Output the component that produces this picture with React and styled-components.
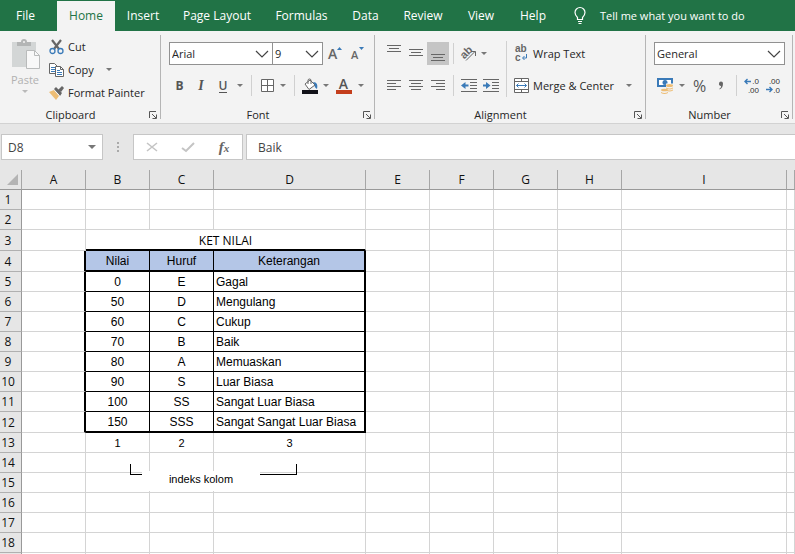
import React from "react";
import styled, { createGlobalStyle } from "styled-components";

const tabs = [
  { name: "File", width: 57 },
  { name: "Home", width: 58, active: true },
  { name: "Insert", width: 56 },
  { name: "Page Layout", width: 92 },
  { name: "Formulas", width: 77 },
  { name: "Data", width: 51 },
  { name: "Review", width: 64 },
  { name: "View", width: 52 },
  { name: "Help", width: 52 },
];

const columns = [
  { name: "A", width: 64 },
  { name: "B", width: 64 },
  { name: "C", width: 64 },
  { name: "D", width: 152 },
  { name: "E", width: 64 },
  { name: "F", width: 64 },
  { name: "G", width: 64 },
  { name: "H", width: 64 },
  { name: "I", width: 165 },
];

const grades = [
  ["0", "E", "Gagal"],
  ["50", "D", "Mengulang"],
  ["60", "C", "Cukup"],
  ["70", "B", "Baik"],
  ["80", "A", "Memuaskan"],
  ["90", "S", "Luar Biasa"],
  ["100", "SS", "Sangat Luar Biasa"],
  ["150", "SSS", "Sangat Sangat Luar Biasa"],
];

const Arrow = ({ color = "#777" }) => (
  <svg width="6" height="3" viewBox="0 0 6 3">
    <path d="M0 0h6L3 3z" fill={color} />
  </svg>
);

const Chevron = () => (
  <svg width="14" height="8" viewBox="0 0 14 8">
    <path d="M1 1l6 6 6-6" fill="none" stroke="#444" strokeWidth="1.2" />
  </svg>
);

const Lines = ({ rows, height = 12, top = 0 }) => (
  <svg width="14" height={height} viewBox={`0 0 14 ${height}`}>
    {rows.map(([x, w], i) => (
      <rect key={i} x={x} y={top + i * 3} width={w} height="1" fill="#666" />
    ))}
  </svg>
);

const Indent = ({ right }) => (
  <svg width="16" height="14" viewBox="0 0 16 14">
    <path
      d="M0 .5h16M9 3.5h7M9 6.5h7M9 9.5h7M0 12.5h16"
      stroke="#666"
      fill="none"
    />
    <path
      d={right ? "M0 5.500h3V3l4.500 3.500L3 10V7.500H0z" : "M7.500 5.500h-3V3L0 6.500 4.500 10V7.500h3z"}
      fill="#3a7ab8"
    />
  </svg>
);

const Launcher = () => (
  <svg width="8" height="8" viewBox="0 0 8 8">
    <path d="M.5 7V.5H7M3 3l4 4M7.500 3.500v4h-4" fill="none" stroke="#555" />
  </svg>
);

const PasteIcon = () => (
  <svg width="29" height="30" viewBox="0 0 29 30">
    <path d="M1 3h24v25H1z" fill="#d3d6d6" />
    <path d="M6 7V3h4a3 3 0 016 0h4v4z" fill="#b3b5b5" />
    <circle cx="13" cy="3" r="1" fill="#f3f3f3" />
    <path d="M15.500 11.500h8l5 5v13h-13z" fill="#f8f8f8" stroke="#b9bbbb" />
    <path d="M23.500 11.500v5h5" fill="none" stroke="#b9bbbb" />
  </svg>
);

const CutIcon = () => (
  <svg width="16" height="16" viewBox="0 0 16 16">
    <path d="M3 1l7 9M12 1L5 10" stroke="#666" strokeWidth="2.200" fill="none" />
    <circle cx="3.500" cy="12" r="2.500" fill="none" stroke="#3a7ab8" strokeWidth="1.300" />
    <circle cx="11.500" cy="12" r="2.500" fill="none" stroke="#3a7ab8" strokeWidth="1.300" />
  </svg>
);

const CopyIcon = () => (
  <svg width="16" height="16" viewBox="0 0 16 16">
    <path d="M.5 1.500h5l3 3v7h-8z" fill="#fff" stroke="#666" />
    <path d="M2 5.500h4M2 7.500h4M2 9.500h4" stroke="#3a7ab8" />
    <path d="M6.500 4.500h5l3 3v7h-8z" fill="#fff" stroke="#666" />
    <path d="M11.500 4.500v3h3" fill="none" stroke="#666" />
    <path d="M8 8.500h3M8 10.500h5M8 12.500h5" stroke="#3a7ab8" />
  </svg>
);

const BrushIcon = () => (
  <svg width="16" height="16" viewBox="0 0 16 16">
    <path d="M0 7l5-2 5 6-3 4z" fill="#edbd75" />
    <path d="M5 4l2-2 6 6-2 3z" fill="#666" />
    <path d="M9 5l4-4 2 2-3 4z" fill="#666" />
    <path d="M5.500 5.500l5 5" stroke="#f3f3f3" />
  </svg>
);

const BordersIcon = () => (
  <svg width="13" height="13" viewBox="0 0 13 13">
    <path d="M.5.5h12v12H.5z" fill="#fff" stroke="#666" />
    <path d="M6.500 1v11M1 6.500h11" stroke="#666" />
  </svg>
);

const FillIcon = () => (
  <svg width="16" height="16" viewBox="0 0 16 16">
    <path d="M3 6l5-4 5 5-6 4.500z" fill="#fff" stroke="#666" />
    <path d="M6 6V2.500a1.500 1.500 0 013 0V6" fill="none" stroke="#666" />
    <path d="M11 4c4 0 5 3 4 7-2-1-3-3-2-4z" fill="#3a7ab8" />
    <rect y="12" width="16" height="4" fill="#111118" />
  </svg>
);

const OrientationIcon = () => (
  <svg width="17" height="16" viewBox="0 0 17 16">
    <text
      x="2"
      y="12"
      transform="rotate(-45 5 10)"
      fontFamily="Liberation Sans, sans-serif"
      fontSize="11"
      fontWeight="700"
      fill="#666"
    >
      ab
    </text>
    <path d="M6 14.500l9-9M11 5.500h4.500V10" fill="none" stroke="#666" />
  </svg>
);

const WrapIcon = () => (
  <svg width="16" height="17" viewBox="0 0 16 17">
    <g fontFamily="Liberation Sans, sans-serif" fontSize="10" fontWeight="700" fill="#666">
      <text x="1" y="7">ab</text>
      <text x="1" y="16">c</text>
    </g>
    <path d="M12.500 9v4H9M10.500 11l-2 2 2 2" fill="none" stroke="#3a7ab8" />
  </svg>
);

const MergeIcon = () => (
  <svg width="16" height="15" viewBox="0 0 16 15">
    <path d="M.5.5h14v14H.5z" fill="#fff" stroke="#666" />
    <path d="M1 3.500h13M1 11.500h13M7.500 1v2.500M7.500 11.500V14" stroke="#666" />
    <path d="M2.500 7.500h10M4.500 5.500l-2 2 2 2M10.500 5.500l2 2-2 2" fill="none" stroke="#3a7ab8" />
  </svg>
);

const MoneyIcon = () => (
  <svg width="16" height="16" viewBox="0 0 16 16">
    <path d="M0 0h16v9H0z" fill="#3a7ab8" />
    <path d="M2 2h12v5H2z" fill="#fff" />
    <circle cx="8" cy="4.500" r="2.500" fill="#3a7ab8" />
    <path d="M9 5.500h7v8h-4v2.500H4v-5h5z" fill="#f3f3f3" />
    <g fill="#edbd75">
      <ellipse cx="12.500" cy="7.500" rx="3.500" ry="1.500" />
      <path d="M9 9.500q3.500 2 7 0v1q-3.500 2-7 0zM9 11.500q3.500 2 7 0v1q-3.500 2-7 0z" />
      <ellipse cx="7.500" cy="12" rx="3.500" ry="1.300" />
      <path d="M4 14q3.500 2 7 0v1q-3.500 2-7 0z" />
    </g>
  </svg>
);

const DecimalIcon = ({ less }) => (
  <svg width="16" height="15" viewBox="0 0 16 15">
    <g fontFamily="Liberation Sans, sans-serif" fontSize="8" fill="#333" textAnchor="end">
      <text x="15" y="6">{less ? ".00" : ".0"}</text>
      <text x="15" y="15">{less ? ".0" : ".00"}</text>
    </g>
    <path
      d={less ? "M1 11.500h6M4.500 9l2.500 2.500L4.500 14" : "M7 3.500H1M3.500 1L1 3.500 3.500 6"}
      fill="none"
      stroke="#3a7ab8"
      strokeWidth="1.400"
    />
  </svg>
);

const CommaIcon = () => (
  <svg width="6" height="9" viewBox="0 0 6 9">
    <path d="M1 2.500a2 2 0 014 0c0 3-1 5-3.500 6V7.500C3 7 3 6 3 5a2 2 0 01-2-2.500z" fill="#666" />
  </svg>
);

const SizeIcon = ({ down }) => (
  <svg width="14" height="17" viewBox="0 0 14 17">
    <text
      x="0"
      y="14"
      fontFamily="Open Sans, sans-serif"
      fontSize={down ? 11 : 14}
      fontWeight="600"
      fill="#666"
    >
      A
    </text>
    <path d={down ? "M8 2h5l-2.500 3z" : "M9 5l2.500-3L14 5z"} fill="#3a7ab8" />
  </svg>
);

const BulbIcon = () => (
  <svg width="12" height="17" viewBox="0 0 12 17">
    <path
      d="M3.500 12.500v-2C2 9 1 8 1 5.500a5 5 0 0110 0C11 8 10 9 8.500 10.500v2zM4 14.500h4M4.500 16.500h3"
      fill="none"
      stroke="#fff"
      strokeWidth="1.200"
    />
  </svg>
);

const ClipboardGroup = () => (
  <Group $w={160}>
    <Clipboard>
      <PasteButton>
        <PasteIcon />
        Paste
        <Arrow color="#b9b9b9" />
      </PasteButton>
      <Stack>
        <LabelButton $h={23}>
          <CutIcon />
          Cut
        </LabelButton>
        <LabelButton $h={23}>
          <CopyIcon />
          Copy
          <ArrowSlot>
            <Arrow />
          </ArrowSlot>
        </LabelButton>
        <LabelButton $h={23}>
          <BrushIcon />
          Format Painter
        </LabelButton>
      </Stack>
    </Clipboard>
    <GroupFooter name="Clipboard" />
  </Group>
);

const GroupFooter = ({ name }) => (
  <Footer>
    <span>{name}</span>
    <Tool $w={12} $h={8} aria-label={`${name} settings`}>
      <Launcher />
    </Tool>
  </Footer>
);

const Combo = ({ label, value, width, joined }) => (
  <ComboBox $w={width} $joined={joined}>
    <select aria-label={label} defaultValue={value}>
      <option>{value}</option>
    </select>
    <Chevron />
  </ComboBox>
);

const Drop = ({ label }) => (
  <Tool $w={12} aria-label={label}>
    <Arrow />
  </Tool>
);

const FontGroup = () => (
  <Group $w={213}>
    <Tools>
      <ToolRow>
        <Combo label="Font name" value="Arial" width={104} />
        <Combo label="Font size" value="9" width={51} joined />
        <Tool $w={24} aria-label="Increase font size">
          <SizeIcon />
        </Tool>
        <Tool $w={22} aria-label="Decrease font size">
          <SizeIcon down />
        </Tool>
      </ToolRow>
      <ToolRow>
        <Tool $w={21}>
          <b>B</b>
        </Tool>
        <Tool $w={22}>
          <Italic>I</Italic>
        </Tool>
        <Tool $w={22}>
          <Underline>U</Underline>
        </Tool>
        <Drop label="Underline style" />
        <Rule $m={5} />
        <Tool $w={20} aria-label="Borders">
          <BordersIcon />
        </Tool>
        <Drop label="Border style" />
        <Rule $m={5} />
        <Tool $w={20} aria-label="Fill color">
          <FillIcon />
        </Tool>
        <Drop label="Fill colors" />
        <Tool $w={23}>
          <ColorLetter>A</ColorLetter>
        </Tool>
        <Drop label="Font colors" />
      </ToolRow>
    </Tools>
    <GroupFooter name="Font" />
  </Group>
);

const full = [0, 14];

const AlignmentGroup = () => (
  <Group $w={270}>
    <Split>
      <Tools>
        <ToolRow>
          <Tool $w={22} aria-label="Top align">
            <Lines rows={[full, [2, 10], full]} height={17} top={0} />
          </Tool>
          <Tool $w={22} aria-label="Middle align">
            <Lines rows={[full, [2, 10], full]} height={17} top={4} />
          </Tool>
          <Tool $w={22} $h={23} $pressed aria-label="Bottom align">
            <Lines rows={[full, [2, 10], full]} height={17} top={9} />
          </Tool>
          <Rule $m={4} />
          <Tool $w={20} aria-label="Orientation">
            <OrientationIcon />
          </Tool>
          <Drop label="Orientation options" />
        </ToolRow>
        <ToolRow>
          <Tool $w={22} aria-label="Align left">
            <Lines rows={[full, [0, 9], full, [0, 9]]} />
          </Tool>
          <Tool $w={22} aria-label="Center">
            <Lines rows={[full, [2, 10], full, [2, 10]]} />
          </Tool>
          <Tool $w={22} aria-label="Align right">
            <Lines rows={[full, [5, 9], full, [5, 9]]} />
          </Tool>
          <Rule $m={4} />
          <Tool $w={22} aria-label="Decrease indent">
            <Indent />
          </Tool>
          <Tool $w={22} aria-label="Increase indent">
            <Indent right />
          </Tool>
        </ToolRow>
      </Tools>
      <TallRule />
      <Tools $flush>
        <LabelButton $h={23}>
          <WrapIcon />
          Wrap Text
        </LabelButton>
        <LabelButton $h={22}>
          <MergeIcon />
          Merge &amp; Center
          <ArrowSlot>
            <Arrow />
          </ArrowSlot>
        </LabelButton>
      </Tools>
    </Split>
    <GroupFooter name="Alignment" />
  </Group>
);

const NumberGroup = () => (
  <Group $w={146}>
    <Tools>
      <ToolRow>
        <Combo label="Number format" value="General" width={131} />
      </ToolRow>
      <ToolRow>
        <Tool $w={22} aria-label="Accounting format">
          <MoneyIcon />
        </Tool>
        <Drop label="Currencies" />
        <Tool $w={23}>
          <Percent>%</Percent>
        </Tool>
        <Tool $w={20} aria-label="Comma style">
          <CommaIcon />
        </Tool>
        <Rule $m={5} />
        <Tool $w={20} aria-label="Increase decimal">
          <DecimalIcon />
        </Tool>
        <Tool $w={22} aria-label="Decrease decimal">
          <DecimalIcon less />
        </Tool>
      </ToolRow>
    </Tools>
    <GroupFooter name="Number" />
  </Group>
);

const Blanks = ({ count }) =>
  Array.from({ length: count }, (_, i) => <Cell key={i} />);

const Row = ({ number, children, tall }) => (
  <tr>
    <RowHead $tall={tall}>{number}</RowHead>
    {children}
  </tr>
);

const Sheet = () => (
  <SheetArea>
    <Grid>
      <colgroup>
        <Col $w={22} />
        {columns.map((c) => (
          <Col key={c.name} $w={c.width} />
        ))}
        <col />
      </colgroup>
      <thead>
        <tr>
          <ColHead>
            <Corner>
              <svg width="11" height="11" viewBox="0 0 11 11">
                <path d="M11 0v11H0z" fill="#b4b4b4" />
              </svg>
            </Corner>
          </ColHead>
          {columns.map((c) => (
            <ColHead key={c.name}>{c.name}</ColHead>
          ))}
          <ColHead />
        </tr>
      </thead>
      <tbody>
        <Row number={1}>
          <Blanks count={10} />
        </Row>
        <Row number={2}>
          <Blanks count={10} />
        </Row>
        <Row number={3} tall>
          <Cell />
          <TitleCell colSpan={3}>KET NILAI</TitleCell>
          <Blanks count={6} />
        </Row>
        <Row number={4} tall>
          <Cell $thickRight />
          <Cell $head>Nilai</Cell>
          <Cell $head>Huruf</Cell>
          <Cell $head $thickRight>
            Keterangan
          </Cell>
          <Blanks count={6} />
        </Row>
        {grades.map(([score, letter, note], i) => {
          const last = i === grades.length - 1;
          return (
            <Row key={score} number={i + 5} tall={last}>
              <Cell $thickRight />
              <Cell $ink $thickBottom={last}>
                {score}
              </Cell>
              <Cell $ink $thickBottom={last}>
                {letter}
              </Cell>
              <Cell $ink $left $thickRight $thickBottom={last}>
                {note}
              </Cell>
              <Blanks count={6} />
            </Row>
          );
        })}
        <Row number={13}>
          <Cell />
          <Cell $small>1</Cell>
          <Cell $small>2</Cell>
          <Cell $small>3</Cell>
          <Blanks count={6} />
        </Row>
        {[14, 15, 16, 17, 18, ""].map((n) => (
          <Row key={n} number={n}>
            <Blanks count={10} />
          </Row>
        ))}
      </tbody>
    </Grid>
    <Annotation>
      <Bracket $w={12} $side="left" />
      <Note>indeks kolom</Note>
      <Bracket $w={37} $side="right" />
    </Annotation>
  </SheetArea>
);

const App = () => {
  return (
    <Page>
      <GlobalStyle />
      <TabBar>
        {tabs.map((t) => (
          <Tab key={t.name} $w={t.width} $active={t.active}>
            {t.name}
          </Tab>
        ))}
        <TellMe>
          <BulbIcon />
          Tell me what you want to do
        </TellMe>
      </TabBar>
      <Ribbon>
        <ClipboardGroup />
        <FontGroup />
        <AlignmentGroup />
        <NumberGroup />
      </Ribbon>
      <FormulaBar>
        <NameBox>
          <input aria-label="Name box" defaultValue="D8" />
          <svg width="8" height="4" viewBox="0 0 8 4">
            <path d="M0 0h8L4 4z" fill="#777" />
          </svg>
        </NameBox>
        <Dots>
          <svg width="2" height="11" viewBox="0 0 2 11">
            <path d="M0 0h2v2H0zM0 4h2v2H0zM0 8h2v2H0z" fill="#aaa" />
          </svg>
        </Dots>
        <FormulaButtons>
          <Tool $w={36} aria-label="Cancel">
            <svg width="12" height="10" viewBox="0 0 12 10">
              <path d="M1 1l10 8M11 1L1 9" stroke="#c4c4c4" strokeWidth="1.600" />
            </svg>
          </Tool>
          <Tool $w={36} aria-label="Enter">
            <svg width="14" height="10" viewBox="0 0 14 10">
              <path d="M1 6l4 3 8-8" fill="none" stroke="#c4c4c4" strokeWidth="2" />
            </svg>
          </Tool>
          <Tool $w={36}>
            <Fx>
              f<small>x</small>
            </Fx>
          </Tool>
        </FormulaButtons>
        <FormulaInput aria-label="Formula" defaultValue="Baik" />
      </FormulaBar>
      <Sheet />
    </Page>
  );
};

export default App;

const GlobalStyle = createGlobalStyle`
  * {
    box-sizing: border-box;
  }
  body {
    margin: 0;
    background: #e6e6e6;
  }
  body,
  button,
  input,
  select {
    font-family: "Open Sans", "Noto Sans", sans-serif;
    font-size: 11px;
    color: #262626;
  }
  button {
    border: 0;
    padding: 0;
    background: transparent;
    white-space: nowrap;
  }
  svg {
    display: block;
    flex: none;
    overflow: visible;
  }
`;

const Page = styled.div`
  display: flex;
  flex-direction: column;
  height: 100vh;
  overflow: hidden;
`;

const TabBar = styled.nav`
  display: flex;
  flex: none;
  height: 31px;
  padding-top: 1px;
  background: #217346;
`;

const Tab = styled.button`
  flex: none;
  width: ${(p) => p.$w}px;
  padding-bottom: 2px;
  font-size: 12px;
  color: ${(p) => (p.$active ? "#217346" : "#fff")};
  background: ${(p) => (p.$active ? "#f3f3f3" : "transparent")};
  &:first-child {
    padding-right: 6px;
  }
`;

const TellMe = styled.button`
  display: flex;
  align-items: center;
  gap: 14px;
  margin-left: 15px;
  padding-bottom: 2px;
  color: #fff;
`;

const Ribbon = styled.div`
  display: flex;
  flex: none;
  height: 93px;
  background: #f3f3f3;
  border-bottom: 1px solid #d2d2d2;
`;

const Group = styled.section`
  display: flex;
  flex-direction: column;
  flex: none;
  box-sizing: content-box;
  width: ${(p) => p.$w}px;
  margin: 4px 0;
  border-right: 1px solid #b5b5b5;
`;

const Footer = styled.div`
  display: flex;
  align-items: center;
  margin-top: auto;
  padding-right: 1px;
  height: 8px;
  line-height: 8px;
  span {
    flex: 1;
    padding-right: 6px;
    text-align: center;
  }
`;

const Clipboard = styled.div`
  display: flex;
  gap: 5px;
  padding-left: 6px;
`;

const PasteButton = styled.button`
  display: flex;
  flex-direction: column;
  align-items: center;
  width: 38px;
  padding-top: 4px;
  gap: 3px;
  color: #b1b1b1;
`;

const Stack = styled.div`
  display: flex;
  flex-direction: column;
`;

const LabelButton = styled.button`
  display: flex;
  align-items: center;
  gap: 3px;
  height: ${(p) => p.$h}px;
`;

const ArrowSlot = styled.span`
  padding-left: 9px;
`;

const Tools = styled.div`
  display: flex;
  flex-direction: column;
  gap: 9px;
  padding: 7px 0 0 ${(p) => (p.$flush ? 7 : 8)}px;
`;

const ToolRow = styled.div`
  display: flex;
  align-items: center;
  height: 23px;
`;

const Split = styled.div`
  display: flex;
`;

const Rule = styled.span`
  width: 1px;
  height: 21px;
  margin: 0 ${(p) => p.$m}px;
  background: #d0d0d0;
`;

const TallRule = styled.span`
  width: 1px;
  margin: 6px 0 0 4px;
  background: #d0d0d0;
`;

const Tool = styled.button`
  display: flex;
  flex: none;
  align-items: center;
  justify-content: center;
  width: ${(p) => p.$w}px;
  height: ${(p) => p.$h || 22}px;
  color: #555;
  background: ${(p) => (p.$pressed ? "#c5c5c5" : "transparent")};
  b {
    font-size: 12px;
  }
`;

const Italic = styled.i`
  font-family: "Liberation Serif", serif;
  font-size: 14px;
  font-weight: bold;
`;

const Underline = styled.span`
  font-size: 12px;
  font-weight: 600;
  line-height: 13px;
  border-bottom: 1px solid #555;
`;

const ColorLetter = styled.span`
  width: 16px;
  height: 16px;
  border-bottom: 4px solid #c43e1c;
  font-size: 14px;
  font-weight: 600;
  line-height: 12px;
`;

const Percent = styled.span`
  font-size: 16px;
`;

const ComboBox = styled.div`
  display: grid;
  align-items: center;
  width: ${(p) => p.$w}px;
  height: 23px;
  margin-left: ${(p) => (p.$joined ? -1 : 0)}px;
  border: 1px solid #919191;
  background: #fff;
  select {
    grid-area: 1 / 1;
    width: 100%;
    height: 21px;
    padding: 0 2px;
    border: 0;
    appearance: none;
    background: transparent;
  }
  svg {
    grid-area: 1 / 1;
    justify-self: end;
    margin-right: 3px;
    pointer-events: none;
  }
`;

const FormulaBar = styled.div`
  display: flex;
  flex: none;
  height: 46px;
  padding: 10px 0 9px 1px;
  background: #e6e6e6;
  input {
    font-size: 12px;
    color: #444;
  }
`;

const NameBox = styled.div`
  display: flex;
  align-items: center;
  width: 102px;
  height: 26px;
  padding: 0 6px;
  border: 1px solid #c6c6c6;
  background: #fff;
  input {
    flex: 1;
    min-width: 0;
    padding: 0;
    border: 0;
    background: transparent;
  }
`;

const Dots = styled.div`
  display: flex;
  align-items: center;
  justify-content: center;
  width: 30px;
`;

const FormulaButtons = styled.div`
  display: flex;
  align-items: center;
  width: 110px;
  height: 26px;
  border: 1px solid #c6c6c6;
  background: #fff;
`;

const Fx = styled.i`
  font-family: "Liberation Serif", serif;
  font-size: 15px;
  font-weight: bold;
  color: #666;
  small {
    font-size: 11px;
  }
`;

const FormulaInput = styled.input`
  flex: 1;
  min-width: 0;
  height: 26px;
  margin-left: 3px;
  padding: 0 11px;
  border: 1px solid #c6c6c6;
  border-right: 0;
`;

const SheetArea = styled.main`
  position: relative;
  flex: 1;
  overflow: hidden;
  background: #fff;
`;

const Grid = styled.table`
  width: 100%;
  min-width: 795px;
  table-layout: fixed;
  border-collapse: separate;
  border-spacing: 0;
`;

const Col = styled.col`
  width: ${(p) => p.$w}px;
`;

const ColHead = styled.th`
  height: 20px;
  padding: 0;
  font-size: 12px;
  font-weight: normal;
  line-height: 19px;
  color: #111;
  background: #e6e6e6;
  border-right: 1px solid #a6a6a6;
  border-bottom: 1px solid #999;
`;

const Corner = styled.div`
  display: flex;
  justify-content: flex-end;
  padding: 0 3px 0 0;
`;

const RowHead = styled.th`
  height: ${(p) => (p.$tall ? 21 : 20)}px;
  padding: 1px 5px 0 0;
  font-size: 12px;
  font-weight: normal;
  line-height: 18px;
  vertical-align: bottom;
  color: #111;
  background: #e6e6e6;
  border-right: 1px solid #999;
  border-bottom: 1px solid #b0b0b0;
`;

const Cell = styled.td`
  padding: 2px 2px 0;
  font-family: "Liberation Sans", Arial, sans-serif;
  font-size: ${(p) => (p.$small ? 11 : 12)}px;
  line-height: 17px;
  text-align: ${(p) => (p.$left ? "left" : "center")};
  vertical-align: bottom;
  white-space: nowrap;
  color: #000;
  background: ${(p) => (p.$head ? "#b4c6e7" : "transparent")};
  border: 0 solid ${(p) => (p.$ink || p.$head ? "#000" : "#d4d4d4")};
  border-right-width: ${(p) => (p.$thickRight ? 2 : 1)}px;
  border-bottom-width: ${(p) => (p.$head || p.$thickBottom ? 2 : 1)}px;
  border-right-color: ${(p) => p.$thickRight && "#000"};
`;

const TitleCell = styled(Cell)`
  font-family: "Open Sans", sans-serif;
  border-bottom: 2px solid #000;
`;

// text box that floats over the cells around B14:D15
const Annotation = styled.div`
  position: absolute;
  top: 294px;
  left: 130px;
  display: flex;
`;

const Bracket = styled.span`
  width: ${(p) => p.$w}px;
  height: 11px;
  border-bottom: 1px solid #000;
  border-${(p) => p.$side}: 1px solid #000;
`;

const Note = styled.span`
  width: 118px;
  height: 20px;
  margin-top: 7px;
  font-family: "Liberation Sans", Arial, sans-serif;
  font-size: 11px;
  line-height: 17px;
  text-align: center;
  color: #000;
  background: #fff;
`;
